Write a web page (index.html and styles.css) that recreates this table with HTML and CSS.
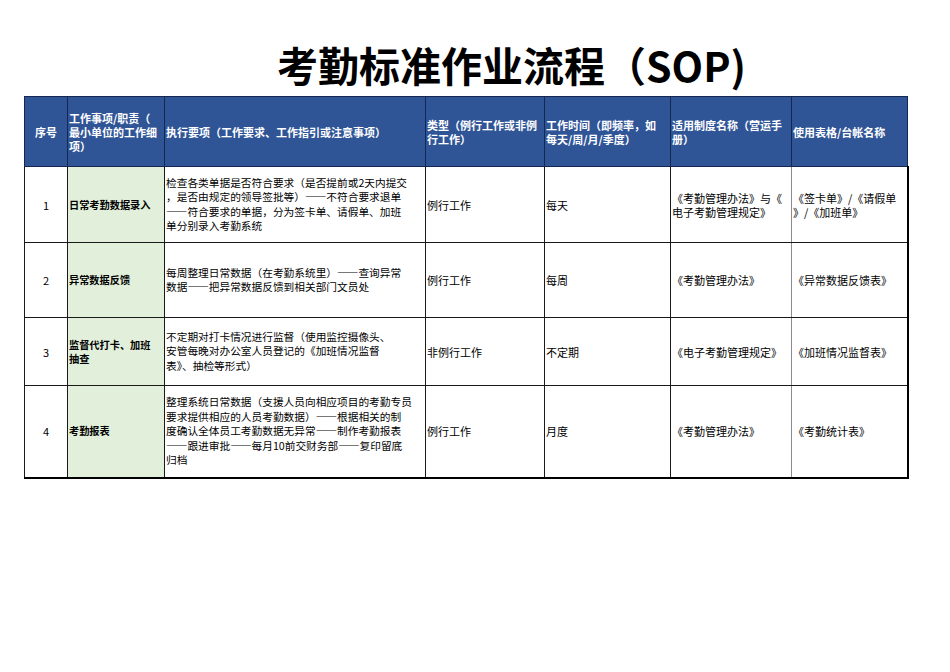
FILE: index.html
```html
<!DOCTYPE html>
<html lang="zh-CN">
<head>
<meta charset="utf-8">
<title>考勤标准作业流程（SOP)</title>
<link rel="stylesheet" href="styles.css">
</head>
<body>
<div class="page">
  <h1 class="title">考勤标准作业流程（SOP)</h1>
  <table class="sop">
    <colgroup>
      <col class="c1"><col class="c2"><col class="c3"><col class="c4"><col class="c5"><col class="c6"><col class="c7">
    </colgroup>
    <thead>
      <tr class="head">
        <th class="center">序号</th>
        <th>工作事项/职责（<br>最小单位的工作细<br>项）</th>
        <th>执行要项（工作要求、工作指引或注意事项）</th>
        <th>类型（例行工作或非例<br>行工作）</th>
        <th>工作时间（即频率，如<br>每天/周/月/季度）</th>
        <th class="gray-r">适用制度名称（营运手<br>册）</th>
        <th>使用表格/台帐名称</th>
      </tr>
    </thead>
    <tbody>
      <tr class="r1">
        <td class="center">1</td>
        <td class="item">日常考勤数据录入</td>
        <td class="desc">检查各类单据是否符合要求（是否提前或2天内提交<br>，是否由规定的领导签批等）——不符合要求退单<br>——符合要求的单据，分为签卡单、请假单、加班<br>单分别录入考勤系统</td>
        <td>例行工作</td>
        <td>每天</td>
        <td class="gray-r">《考勤管理办法》与《<br>电子考勤管理规定》</td>
        <td>《签卡单》/《请假单<br>》/《加班单》</td>
      </tr>
      <tr class="r2">
        <td class="center">2</td>
        <td class="item">异常数据反馈</td>
        <td class="desc">每周整理日常数据（在考勤系统里）——查询异常<br>数据——把异常数据反馈到相关部门文员处</td>
        <td>例行工作</td>
        <td>每周</td>
        <td class="gray-r">《考勤管理办法》</td>
        <td>《异常数据反馈表》</td>
      </tr>
      <tr class="r3">
        <td class="center">3</td>
        <td class="item">监督代打卡、加班<br>抽查</td>
        <td class="desc">不定期对打卡情况进行监督（使用监控摄像头、<br>安管每晚对办公室人员登记的《加班情况监督<br>表》、抽检等形式）</td>
        <td>非例行工作</td>
        <td>不定期</td>
        <td class="gray-r">《电子考勤管理规定》</td>
        <td>《加班情况监督表》</td>
      </tr>
      <tr class="r4">
        <td class="center">4</td>
        <td class="item">考勤报表</td>
        <td class="desc">整理系统日常数据（支援人员向相应项目的考勤专员<br>要求提供相应的人员考勤数据）——根据相关的制<br>度确认全体员工考勤数据无异常——制作考勤报表<br>——跟进审批——每月10前交财务部——复印留底<br>归档</td>
        <td>例行工作</td>
        <td>月度</td>
        <td class="gray-r">《考勤管理办法》</td>
        <td>《考勤统计表》</td>
      </tr>
    </tbody>
  </table>
</div>
</body>
</html>
```
FILE: styles.css
```css
html, body {
  margin: 0;
  padding: 0;
  background: #ffffff;
}
body {
  font-family: "Noto Sans CJK SC", "Noto Sans", sans-serif;
  color: #000000;
}
.page {
  width: 950px;
  height: 672px;
}
.title {
  margin: 0;
  padding: 38px 0 0 277px;
  height: 52px;
  line-height: 52px;
  font-size: 41px;
  font-weight: 700;
  letter-spacing: 0;
  white-space: nowrap;
}
.sop {
  margin: 6px 0 0 24px;
  border-collapse: collapse;
  table-layout: fixed;
  width: 883px;
}
.c1 { width: 43px; }
.c2 { width: 97px; }
.c3 { width: 261px; }
.c4 { width: 119px; }
.c5 { width: 126px; }
.c6 { width: 121px; }
.c7 { width: 116px; }
.sop th,
.sop td {
  border: 1px solid #1a1a1a;
  padding: 0 1px;
  vertical-align: middle;
  text-align: left;
  white-space: nowrap;
  overflow: hidden;
  font-size: 11px;
  line-height: 14px;
}
.sop th {
  background: #2f5597;
  color: #ffffff;
  font-weight: 700;
  border-color: #142850;
}
.sop th.center,
.sop td.center {
  text-align: center;
}
.sop td.item {
  background: #e2efda;
  font-weight: 700;
  font-size: 10.2px;
}
.sop td.desc {
  font-size: 10.7px;
  line-height: 14.5px;
}
.sop td.gray-r {
  border-right: 1px solid #8c8c8c;
}
.head { height: 70px; }
.r1 { height: 76px; }
.r2 { height: 75px; }
.r3 { height: 68px; }
.r4 { height: 92px; }
.sop tbody tr:last-child td {
  border-bottom: 2px solid #000000;
}
.sop tbody td:last-child {
  border-right: 2px solid #000000;
}
```
